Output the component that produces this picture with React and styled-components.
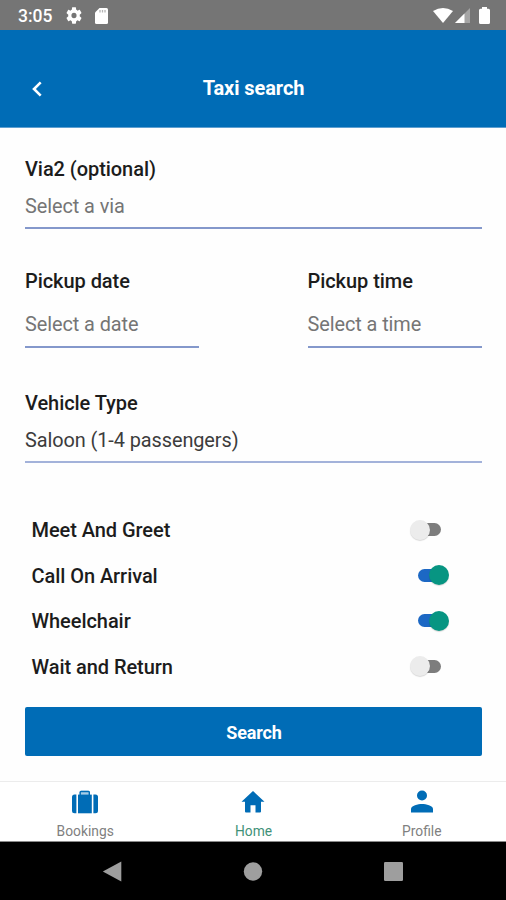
import React, { useState } from "react";
import styled, { createGlobalStyle } from "styled-components";

const GlobalStyle = createGlobalStyle`
  *, *::before, *::after { box-sizing: border-box; }
  body {
    margin: 0;
    background: #fff;
    font-family: Roboto, "Liberation Sans", sans-serif;
  }
  button { font-family: inherit; border: 0; padding: 0; background: none; }
`;

const Screen = styled.div`
  display: flex;
  flex-direction: column;
  width: 506px;
  height: 900px;
  overflow: hidden;
  background: #fefefe;
`;

const StatusBar = styled.div`
  display: flex;
  align-items: center;
  height: 30px;
  padding: 1px 16.5px 0 18px;
  background: #757575;
  color: #fff;
`;

const Clock = styled.span`
  width: 48px;
  font-size: 17.5px;
  font-weight: 500;
  line-height: 22px;
`;

const StatusIcon = styled.svg`
  display: block;
  flex: none;
  width: ${(p) => p.$w}px;
  height: ${(p) => p.$h}px;
  margin-left: ${(p) => p.$gap || 0}px;
  fill: #fff;
`;

const Spacer = styled.div`
  flex: 1;
`;

const Header = styled.header`
  display: grid;
  grid-template-columns: 56px 1fr 56px;
  align-items: center;
  height: 98px;
  padding-top: 19px;
  background: #006cb6;
  border-bottom: 1px solid #5f9fd0;
  color: #fff;
`;

const BackButton = styled.button`
  display: flex;
  padding: 2px 0 0 31px;
`;

const Title = styled.h1`
  margin: 0;
  padding-left: 1px;
  text-align: center;
  font-size: 20px;
  font-weight: 700;
  line-height: 24px;
  letter-spacing: -0.08px;
`;

const Form = styled.main`
  display: flex;
  flex-direction: column;
  height: 653px;
  padding: 29px 24px 0 25px;
`;

const Field = styled.label`
  display: flex;
  flex-direction: column;
  width: ${(p) => p.$width || "100%"};
  margin-bottom: ${(p) => p.$after || 0}px;
  border-bottom: 2px solid ${(p) => p.$line || "#8498cb"};
`;

const FieldName = styled.span`
  font-size: 20px;
  font-weight: 500;
  line-height: 24px;
  letter-spacing: -0.06px;
  color: #1c1c1c;
`;

const FieldValue = styled.span`
  margin: ${(p) => p.$top}px 0 ${(p) => p.$bottom}px;
  font-size: 19.9px;
  line-height: 24px;
  letter-spacing: -0.08px;
  color: ${(p) => (p.$filled ? "#3c3c3c" : "#757575")};
`;

const FieldPair = styled.div`
  display: flex;
  justify-content: space-between;
  margin-bottom: 43px;
`;

const Options = styled.div`
  display: grid;
  grid-template-rows: 46px 45px 46px 45px;
  padding: 0 33px 0 6.5px;
`;

const OptionRow = styled.div`
  display: flex;
  align-items: center;
  justify-content: space-between;
`;

const Toggle = styled.button`
  display: flex;
  align-items: center;
  width: 40px;
  height: 22px;
  margin-top: -1px;
  padding-left: ${(p) => (p.$on ? 9 : 5)}px;
`;

const Track = styled.span`
  display: flex;
  align-items: center;
  width: 27px;
  height: 13px;
  border-radius: 7px;
  background: ${(p) => (p.$on ? "#1c68c4" : "#7d7d7d")};
`;

const Thumb = styled.span`
  flex: none;
  width: 20px;
  height: 20px;
  margin-left: ${(p) => (p.$on ? 11 : -4)}px;
  border-radius: 50%;
  background: ${(p) => (p.$on ? "#079582" : "#ececec")};
  box-shadow: 0 1px 1px rgba(0, 0, 0, 0.15);
`;

const SearchButton = styled.button`
  height: 49px;
  margin-top: 18px;
  padding: 1px 0 0 1px;
  border-radius: 2px;
  background: #006cb6;
  color: #fff;
  font-size: 18px;
  font-weight: 700;
  letter-spacing: -0.15px;
`;

const TabBar = styled.nav`
  display: grid;
  grid-template-columns: repeat(3, 1fr);
  height: 61px;
  padding: 7px 0 0 1px;
  border-top: 1px solid #ececec;
  border-bottom: 1px solid #8a8a8a;
  background: #fff;
`;

const Tab = styled.a`
  display: flex;
  flex-direction: column;
  align-items: center;
  font-size: 13.8px;
  line-height: 18px;
  color: ${(p) => (p.$active ? "#3f9178" : "#808080")};
`;

const TabIcon = styled.svg`
  display: block;
  width: 28px;
  height: 24px;
  margin: 1px 0 8px;
  fill: #006cb6;
`;

const SystemBar = styled.div`
  display: flex;
  align-items: center;
  justify-content: space-between;
  height: 58px;
  padding: 0 102px;
  background: #000;
`;

const SystemIcon = styled.svg`
  display: block;
  width: 20px;
  height: 21px;
  fill: #9e9e9e;
`;

function Switch({ initial, label }) {
  const [on, setOn] = useState(initial);
  return (
    <Toggle $on={on} role="switch" aria-checked={on} aria-label={label} onClick={() => setOn(!on)}>
      <Track $on={on}>
        <Thumb $on={on} />
      </Track>
    </Toggle>
  );
}

const options = [
  { label: "Meet And Greet", on: false },
  { label: "Call On Arrival", on: true },
  { label: "Wheelchair", on: true },
  { label: "Wait and Return", on: false },
];

export default function App() {
  return (
    <Screen>
      <GlobalStyle />
      <StatusBar>
        <Clock>3:05</Clock>
        <StatusIcon $w={16} $h={17} viewBox="2 2 20 20" preserveAspectRatio="none">
          <path d="M19.14 12.94c.04-.3.06-.61.06-.94 0-.32-.02-.64-.07-.94l2.03-1.58c.18-.14.23-.41.12-.61l-1.92-3.32c-.12-.22-.37-.29-.59-.22l-2.39.96c-.5-.38-1.03-.7-1.62-.94l-.36-2.54c-.04-.24-.24-.41-.48-.41h-3.84c-.24 0-.43.17-.47.41l-.36 2.54c-.59.24-1.13.57-1.62.94l-2.39-.96c-.22-.08-.47 0-.59.22L2.74 8.87c-.12.21-.08.47.12.61l2.03 1.58c-.05.3-.09.63-.09.94s.02.64.07.94l-2.03 1.58c-.18.14-.23.41-.12.61l1.92 3.32c.12.22.37.29.59.22l2.39-.96c.5.38 1.03.7 1.62.94l.36 2.54c.05.24.24.41.48.41h3.84c.24 0 .44-.17.47-.41l.36-2.54c.59-.24 1.13-.56 1.62-.94l2.39.96c.22.08.47 0 .59-.22l1.92-3.32c.12-.22.07-.47-.12-.61l-2.01-1.58zM12 15.2A3.2 3.2 0 1 1 12 8.8a3.2 3.2 0 0 1 0 6.4z" />
        </StatusIcon>
        <StatusIcon $w={13} $h={16} $gap={13} viewBox="0 0 13 16">
          <path d="M4.5 0H11.5Q13 0 13 1.5V14.5Q13 16 11.5 16H1.5Q0 16 0 14.5V4.5Z" />
          <path d="M5 2V4.5M7.5 2V4.5M10 2V4.5" stroke="#b4b4b4" strokeWidth="1.3" />
        </StatusIcon>
        <Spacer />
        <StatusIcon $w={20} $h={16} viewBox="0 0 20 16">
          <path d="M0 3Q10-3 20 3L10 15Z" />
        </StatusIcon>
        <StatusIcon $w={15} $h={15} $gap={2} viewBox="0 0 15 15">
          <path d="M15 0V15H0Z" opacity="0.35" />
          <path d="M9.5 5.5V15H0Z" />
        </StatusIcon>
        <StatusIcon $w={11} $h={17} $gap={8.5} viewBox="0 0 11 17">
          <path d="M3 0H8V1.7H9.5Q11 1.7 11 3.2V15.5Q11 17 9.5 17H1.5Q0 17 0 15.5V3.2Q0 1.7 1.5 1.7H3Z" />
        </StatusIcon>
      </StatusBar>

      <Header>
        <BackButton aria-label="Back">
          <svg width="12" height="16" viewBox="0 0 12 16" fill="none" stroke="#fff" strokeWidth="2.6">
            <path d="M9.7 1.4L3 8L9.7 14.6" />
          </svg>
        </BackButton>
        <Title>Taxi search</Title>
      </Header>

      <Form>
        <Field $after={40}>
          <FieldName>Via2 (optional)</FieldName>
          <FieldValue $top={14} $bottom={8}>Select a via</FieldValue>
        </Field>
        <FieldPair>
          <Field $width="174px">
            <FieldName>Pickup date</FieldName>
            <FieldValue $top={20} $bottom={9}>Select a date</FieldValue>
          </Field>
          <Field $width="174.5px">
            <FieldName>Pickup time</FieldName>
            <FieldValue $top={20} $bottom={9}>Select a time</FieldValue>
          </Field>
        </FieldPair>
        <Field $after={44} $line="#a3b2da">
          <FieldName>Vehicle Type</FieldName>
          <FieldValue $filled $top={14} $bottom={8}>Saloon (1-4 passengers)</FieldValue>
        </Field>
        <Options>
          {options.map((o) => (
            <OptionRow key={o.label}>
              <FieldName>{o.label}</FieldName>
              <Switch initial={o.on} label={o.label} />
            </OptionRow>
          ))}
        </Options>
        <SearchButton>Search</SearchButton>
      </Form>

      <TabBar>
        <Tab>
          <TabIcon viewBox="0 0 28 24">
            <path d="M8.5 5V2.2Q8.5 0.7 10 0.7H17.5Q19 0.7 19 2.2V5Z" opacity="0.35" />
            <path d="M8.5 5V2.2Q8.5 0.7 10 0.7H17.5Q19 0.7 19 2.2V5H17.6V2.2H9.9V5Z" />
            <path d="M7 4.6H20.8V23.3H7Z" />
            <path d="M5.4 4.6V23.3H3.5Q1 23.3 1 20.8V7.1Q1 4.6 3.5 4.6Z" />
            <path d="M22.4 4.6V23.3H24.5Q27 23.3 27 20.8V7.1Q27 4.6 24.5 4.6Z" />
          </TabIcon>
          Bookings
        </Tab>
        <Tab $active>
          <TabIcon viewBox="-2.5 -1 28 24">
            <path d="M9 21.5V14.3H14V21.5H18.5Q19.5 21.5 19.5 20.5V10.8H23L11.5 0L0 10.8H3.5V20.5Q3.5 21.5 4.5 21.5Z" />
          </TabIcon>
          Home
        </Tab>
        <Tab>
          <TabIcon viewBox="-3 -0.5 28 24">
            <circle cx="11" cy="5" r="5" />
            <path d="M0 22V18.5C0 15 7 13.5 11 13.5S22 15 22 18.5V22Z" />
          </TabIcon>
          Profile
        </Tab>
      </TabBar>

      <SystemBar>
        <SystemIcon viewBox="0 0 20 21">
          <path d="M0.8 10.5L19.3 0.5V20.5Z" />
        </SystemIcon>
        <SystemIcon viewBox="0 0 20 21">
          <circle cx="10" cy="10.5" r="9.2" />
        </SystemIcon>
        <SystemIcon viewBox="0 0 20 21">
          <rect x="0" y="1" width="19" height="19" rx="1.2" />
        </SystemIcon>
      </SystemBar>
    </Screen>
  );
}
